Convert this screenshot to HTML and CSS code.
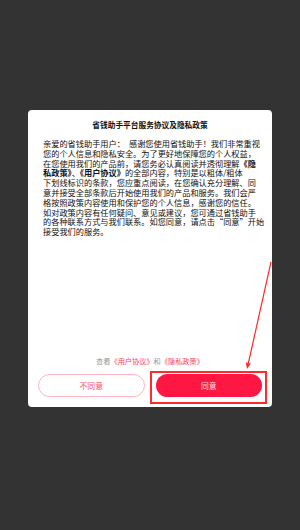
FILE: index.html
```html
<!DOCTYPE html>
<html lang="zh-CN">
<head>
    <meta charset="UTF-8">
    <title>省钱助手</title>
    <link rel="stylesheet" href="styles.css">
</head>
<body>
    <div class="dialog">
        <h1 class="title">省钱助手平台服务协议及隐私政策</h1>

        <div class="content">
            <span class="line">亲爱的省钱助手用户：　感谢您使用省钱助手！我们非常重视</span>
            <span class="line">您的个人信息和隐私安全。为了更好地保障您的个人权益，</span>
            <span class="line">在您使用我们的产品前，请您务必认真阅读并透彻理解<b>《隐</b></span>
            <span class="line"><b>私政策》</b>、<b>《用户协议》</b>的全部内容，特别是以粗体/粗体</span>
            <span class="line">下划线标识的条款，您应重点阅读，在您确认充分理解、同</span>
            <span class="line">意并接受全部条款后开始使用我们的产品和服务。我们会严</span>
            <span class="line">格按照政策内容使用和保护您的个人信息，感谢您的信任。</span>
            <span class="line">如对政策内容有任何疑问、意见或建议，您可通过省钱助手</span>
            <span class="line">的各种联系方式与我们联系。如您同意，请点击“同意”开始</span>
            <span class="line">接受我们的服务。</span>
        </div>

        <div class="footer">
            <p class="links">查看<a href="#">《用户协议》</a>和<a href="#">《隐私政策》</a></p>
            <div class="actions">
                <button class="btn btn-outline">不同意</button>
                <button class="btn btn-primary">同意</button>
            </div>
        </div>
    </div>

    <!-- annotation drawn over the screenshot -->
    <svg class="markup" width="300" height="530" viewBox="0 0 300 530">
        <rect x="151" y="372" width="115" height="31" fill="none" stroke="#ff2b2b" stroke-width="2"/>
        <line x1="271" y1="262" x2="248.3" y2="363.5" stroke="#ff2b2b" stroke-width="1.2"/>
        <polygon points="247,369 250.8,363.6 245.8,362.6" fill="#ff2b2b"/>
    </svg>
</body>
</html>
```

FILE: styles.css
```css
body {
    margin: 0;
    padding: 0;
    width: 300px;
    height: 530px;
    background-color: #333333;
    font-family: "Noto Sans CJK SC", "Noto Sans", sans-serif;
    position: relative;
    overflow: hidden;
}

.dialog {
    box-sizing: border-box;
    width: 244px;
    height: 297px;
    margin: 110px 0 0 28px;
    background-color: white;
    border-radius: 4px;
    display: flex;
    flex-direction: column;
}

.title {
    margin: 0;
    padding-top: 10px;
    font-size: 7.7px;
    line-height: 10px;
    font-weight: bold;
    color: #111;
    text-align: center;
}

.content {
    margin-top: 9px;
    padding: 0 3px 0 15px;
    font-size: 8.2px;
    line-height: 9.8px;
    color: #111;
}

.line {
    display: block;
    white-space: nowrap;
}

.content b {
    font-weight: bold;
}

.footer {
    margin-top: auto;
    padding: 0 10px 10px;
}

.links {
    margin: 0 0 8px;
    font-size: 7.2px;
    line-height: 10px;
    color: #9a9a9a;
    text-align: center;
}

.links a {
    color: #ff3d62;
    text-decoration: none;
}

.actions {
    display: grid;
    grid-template-columns: 1fr 1fr;
    gap: 11px;
}

.btn {
    height: 23px;
    border-radius: 12px;
    font-family: inherit;
    font-size: 7.8px;
    padding: 0;
    cursor: pointer;
}

.btn-outline {
    background-color: white;
    border: 1px solid #ffb3c1;
    color: #ff4a6a;
}

.btn-primary {
    background-color: #ff1744;
    border: none;
    color: #ffd9e0;
}

.markup {
    position: absolute;
    top: 0;
    left: 0;
    pointer-events: none;
}
```
